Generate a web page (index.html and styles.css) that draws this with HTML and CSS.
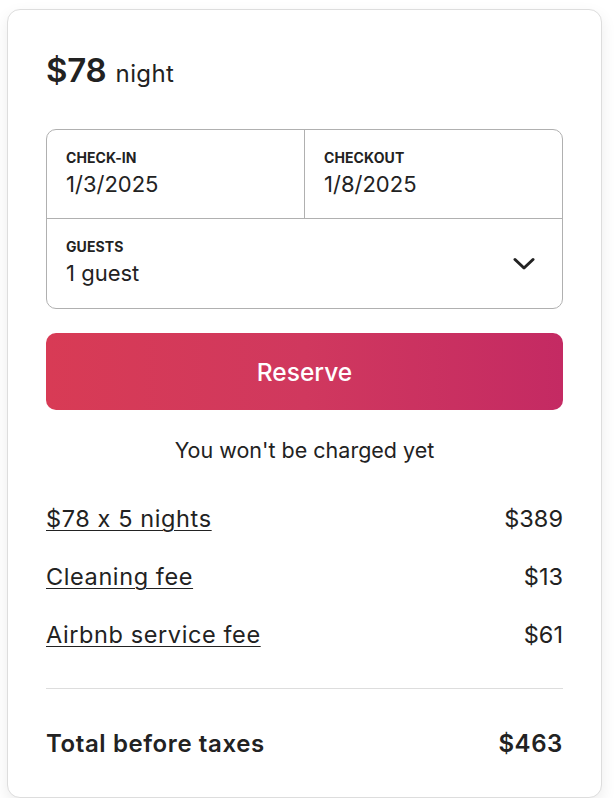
FILE: index.html
```html
<!DOCTYPE html>
<html>
<head>
<meta charset="utf-8">
<link rel="stylesheet" href="styles.css">
</head>
<body>
<div class="card">
  <div class="price"><span class="amount">$78</span><span class="per">night</span></div>
  <div class="picker">
    <div class="dates">
      <div class="cell">
        <div class="label">CHECK-IN</div>
        <div class="value">1/3/2025</div>
      </div>
      <div class="cell cell-right">
        <div class="label">CHECKOUT</div>
        <div class="value">1/8/2025</div>
      </div>
    </div>
    <div class="guests">
      <div class="cell">
        <div class="label">GUESTS</div>
        <div class="value">1 guest</div>
      </div>
      <svg class="chevron" width="22" height="14" viewBox="0 0 22 14"><path d="M2 2.5 L11 11 L20 2.5" fill="none" stroke="#222" stroke-width="3" stroke-linecap="round" stroke-linejoin="round"/></svg>
    </div>
  </div>
  <button class="reserve">Reserve</button>
  <div class="note">You won't be charged yet</div>
  <div class="lines">
    <div class="line"><span class="link">$78 x 5 nights</span><span>$389</span></div>
    <div class="line"><span class="link">Cleaning fee</span><span>$13</span></div>
    <div class="line"><span class="link">Airbnb service fee</span><span>$61</span></div>
  </div>
  <div class="total"><span>Total before taxes</span><span>$463</span></div>
</div>
</body>
</html>
```
FILE: styles.css
```css
html, body {
  margin: 0;
  padding: 0;
  background: #ffffff;
}
body {
  font-family: Inter, "Noto Sans", sans-serif;
  font-feature-settings: "calt" 0;
  color: #222222;
  padding: 9px 0 0 7px;
}
.card {
  box-sizing: border-box;
  width: 595px;
  height: 789px;
  border: 1px solid #dddddd;
  border-radius: 13px;
  box-shadow: 0 6px 16px rgba(0, 0, 0, 0.08);
  padding: 40px 38px 0 38px;
  background: #fff;
}
.price {
  display: flex;
  align-items: baseline;
  gap: 9px;
  height: 40px;
  line-height: 40px;
}
.amount {
  font-size: 33px;
  font-weight: 600;
  letter-spacing: -0.2px;
}
.per {
  font-size: 24px;
  font-weight: 400;
  letter-spacing: 0.4px;
}
.picker {
  margin-top: 39px;
  border: 1px solid #b0b0b0;
  border-radius: 10px;
}
.dates {
  display: flex;
  height: 88px;
  border-bottom: 1px solid #b0b0b0;
}
.dates .cell {
  flex: 1;
}
.cell-right {
  border-left: 1px solid #b0b0b0;
}
.cell {
  padding: 19px 19px 0 19px;
}
.label {
  font-size: 14px;
  font-weight: 700;
  line-height: 18px;
  letter-spacing: 0.1px;
}
.value {
  font-size: 22px;
  line-height: 28px;
  margin-top: 3px;
}
.guests {
  display: flex;
  justify-content: space-between;
  align-items: flex-start;
  height: 89px;
}
.chevron {
  margin-right: 27px;
  margin-top: 38px;
}
.reserve {
  display: block;
  width: 100%;
  height: 77px;
  margin-top: 24px;
  border: 0;
  border-radius: 10px;
  background: linear-gradient(to right, #d83b55 0%, #d0385e 50%, #c42a63 100%);
  color: #fff;
  font-family: Inter, "Noto Sans", sans-serif;
  font-size: 24.5px;
  font-weight: 500;
}
.note {
  text-align: center;
  font-size: 21.5px;
  line-height: 28px;
  margin-top: 26px;
}
.lines {
  margin-top: 40px;
  display: flex;
  flex-direction: column;
  gap: 28px;
  padding-bottom: 38px;
  border-bottom: 1px solid #dddddd;
}
.line {
  display: flex;
  justify-content: space-between;
  font-size: 23.5px;
  line-height: 30px;
}
.link {
  text-decoration: underline;
  text-underline-offset: 3px;
  text-decoration-thickness: 1px;
  letter-spacing: 0.6px;
}
.total {
  display: flex;
  justify-content: space-between;
  font-size: 24px;
  font-weight: 600;
  letter-spacing: 0.6px;
  line-height: 30px;
  margin-top: 40px;
}
```
